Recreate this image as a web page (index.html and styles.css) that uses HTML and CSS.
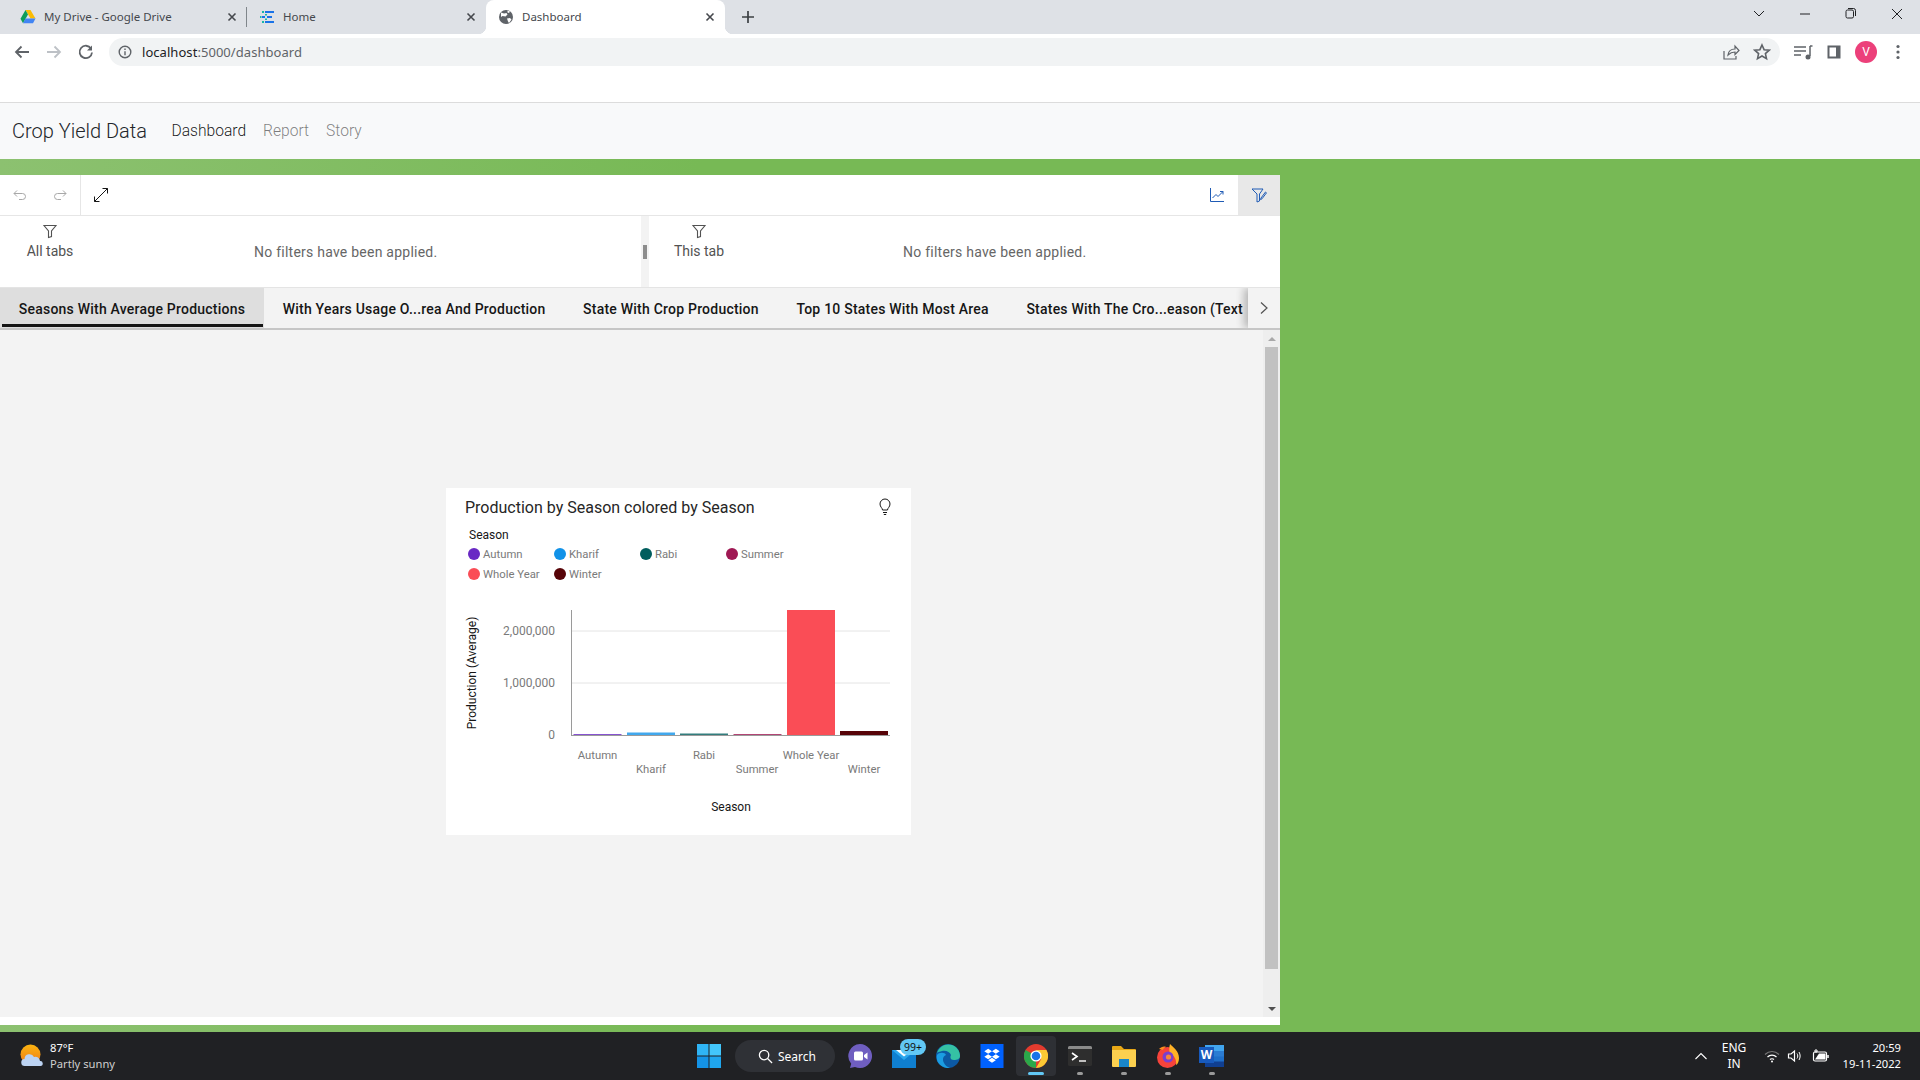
FILE: index.html
```html
<!DOCTYPE html>
<html lang="en">
<head>
    <meta charset="UTF-8">
    <title>Dashboard</title>
    <link rel="stylesheet" href="styles.css">
</head>
<body>
    <!-- browser chrome -->
    <div class="tabstrip">
        <div class="tab">
            <svg class="favicon" viewBox="0 0 16 16"><path d="M5.5 1h5l5 8.6h-5z" fill="#fbbc04"/><path d="M5.5 1 .5 9.8l2.5 4.4 5-8.8z" fill="#0f9d58"/><path d="M3 14.2h10l2.5-4.6h-10z" fill="#4285f4"/></svg>
            <span class="tab-title">My Drive - Google Drive</span>
            <svg class="tab-close" viewBox="0 0 10 10"><path d="M1.5 1.5l7 7M8.5 1.5l-7 7"/></svg>
        </div>
        <div class="tab-sep"></div>
        <div class="tab">
            <svg class="favicon" viewBox="0 0 16 16"><path d="M6 2h9v2H6zM3 7h3v2H3zM8 7h5v2H8zM6 12h9v2H6z" fill="#1a73e8"/><path d="M3 2h2v2H3zM1 7h1.500v2H1zM3 12h2v2H3zM6 5h2v1.500H6zM6 9.500h2V11H6z" fill="#17b8a6"/></svg>
            <span class="tab-title">Home</span>
            <svg class="tab-close" viewBox="0 0 10 10"><path d="M1.5 1.5l7 7M8.5 1.5l-7 7"/></svg>
        </div>
        <div class="tab tab-active">
            <svg class="favicon" viewBox="0 0 16 16"><circle cx="8" cy="8" r="7" fill="#5f6368"/><path d="M3 3.500l3 1 2.500-.5 1 1.500-2 2-3-.5-1.500 1zM9 9.500l3-.5 1.500 1.500L11 14l-1-1.500zM9.500 1.500l2.500 1-1 1.500-1.500-.5z" fill="#fff"/></svg>
            <span class="tab-title">Dashboard</span>
            <svg class="tab-close" viewBox="0 0 10 10"><path d="M1.5 1.5l7 7M8.5 1.5l-7 7"/></svg>
        </div>
        <svg class="new-tab" viewBox="0 0 14 14"><path d="M7 1v12M1 7h12"/></svg>
        <div class="window-controls">
            <svg class="win-btn" viewBox="0 0 46 16"><path d="M18 5l5 5 5-5"/></svg>
            <svg class="win-btn" viewBox="0 0 46 16"><path d="M18 8h10"/></svg>
            <svg class="win-btn" viewBox="0 0 46 16"><rect x="18" y="4" width="7.500" height="8" rx="1.500"/><path d="M20 2.500h5.500a2 2 0 0 1 2 2V10"/></svg>
            <svg class="win-btn" viewBox="0 0 46 16"><path d="M18 3l10 10M28 3L18 13"/></svg>
        </div>
    </div>

    <div class="toolbar">
        <svg class="nav-btn" viewBox="0 0 32 16"><path d="M23 8H10M15.500 2.500 10 8l5.500 5.500"/></svg>
        <svg class="nav-btn nav-off" viewBox="0 0 32 16"><path d="M9 8h13M16.500 2.500 22 8l-5.500 5.500"/></svg>
        <svg class="nav-btn" viewBox="0 0 32 16"><path d="M21 4.500A6.200 6.200 0 1 0 22 8.500"/><path class="nav-fill" d="M22 1.500v5h-5z"/></svg>
        <div class="omnibox">
            <svg class="info-icon" viewBox="0 0 14 14"><circle cx="7" cy="7" r="5.800"/><path d="M7 6.200v4M7 3.500v1.500"/></svg>
            <span class="url">localhost<span class="url-rest">:5000/dashboard</span></span>
            <svg class="omni-icon omni-share" viewBox="0 0 18 18"><path d="M2 8v8h12v-3"/><path d="M6 12c.5-4 3-6 7-6V3l4 4.500-4 4V9c-3 0-5 1-7 3z"/></svg>
            <svg class="omni-icon" viewBox="0 0 18 18"><path d="M9 2l2.100 4.700 5.100.5-3.800 3.400 1.100 5L9 13l-4.500 2.600 1.100-5L1.800 7.200l5.100-.5z" stroke-width="1.600"/></svg>
        </div>
        <svg class="tool-btn" viewBox="0 0 32 18"><path d="M8 4h12M8 8h12M8 12h7M24 3v10"/><path d="M24 3h2.500"/><circle class="nav-fill" cx="22" cy="14" r="2.500"/></svg>
        <svg class="tool-btn" viewBox="0 0 32 18"><rect x="9.500" y="2.500" width="13" height="13" class="panel-icon"/><rect x="11.500" y="4.500" width="6.500" height="9" fill="#fff" stroke="none"/></svg>
        <div class="tool-slot"><span class="avatar">V</span></div>
        <svg class="tool-btn" viewBox="0 0 32 18"><circle class="nav-fill" cx="16" cy="3.500" r="1.600"/><circle class="nav-fill" cx="16" cy="9" r="1.600"/><circle class="nav-fill" cx="16" cy="14.500" r="1.600"/></svg>
    </div>
    <div class="blank-bar"></div>

    <!-- app -->
    <nav class="navbar">
        <span class="brand">Crop Yield Data</span>
        <a class="nav-link nav-link-on">Dashboard</a>
        <a class="nav-link">Report</a>
        <a class="nav-link">Story</a>
    </nav>

    <main class="stage">
        <section class="panel">
            <div class="panel-tools">
                <svg class="ptool ptool-off" viewBox="0 0 16 16"><path d="M5 3.500 2 6.500l3 3M2 6.500h8.500a3 3 0 0 1 0 6H7"/></svg>
                <svg class="ptool ptool-off" viewBox="0 0 16 16"><path d="M11 3.500l3 3-3 3M14 6.500H5.500a3 3 0 0 0 0 6H9"/></svg>
                <div class="ptool-line"></div>
                <svg class="ptool" viewBox="0 0 16 16"><path d="M1.500 14.500l13-13M9.500 1.500h5v5M1.500 9.500v5h5"/></svg>
                <div class="ptool-right">
                    <svg class="ptool ptool-blue" viewBox="0 0 16 16"><path d="M1.500 1v13.500H15"/><path d="M3.500 11l3.500-3.500 2 2L14 4.500M11 4.500h3v3"/></svg>
                    <div class="ptool-on">
                        <svg class="ptool ptool-blue" viewBox="0 0 16 16"><path d="M1 2h11L8.500 7v7l-2.500 1V7z"/><path d="M10 11l4.500-6 1 .8-4.500 6-1.500.8z"/></svg>
                    </div>
                </div>
            </div>

            <div class="filters">
                <div class="filter-part filter-left">
                    <div class="filter-scope">
                        <svg class="funnel" viewBox="0 0 16 16"><path d="M2 2.500h12L9.500 8v5.500l-3 1V8z"/></svg>
                        <span>All tabs</span>
                    </div>
                    <span class="filter-msg">No filters have been applied.</span>
                </div>
                <div class="splitter"><span class="split-handle"></span></div>
                <div class="filter-part">
                    <div class="filter-scope">
                        <svg class="funnel" viewBox="0 0 16 16"><path d="M2 2.500h12L9.500 8v5.500l-3 1V8z"/></svg>
                        <span>This tab</span>
                    </div>
                    <span class="filter-msg">No filters have been applied.</span>
                </div>
            </div>

            <div class="sheet-tabs">
                <div class="sheet-scroll">
                    <span class="sheet-tab sheet-on">Seasons With Average Productions</span>
                    <span class="sheet-tab">With Years Usage O...rea And Production</span>
                    <span class="sheet-tab">State With Crop Production</span>
                    <span class="sheet-tab">Top 10 States With Most Area</span>
                    <span class="sheet-tab">States With The Cro...eason (Text</span>
                </div>
                <div class="sheet-next">
                    <svg viewBox="0 0 10 14"><path d="M2 1.500 8 7l-6 5.500"/></svg>
                </div>
            </div>

            <div class="canvas">
                <div class="canvas-main">
                    <div class="card">
                        <div class="card-head">
                            <span class="card-title">Production by Season colored by Season</span>
                            <svg class="bulb" viewBox="0 0 14 18"><path d="M4.500 12c0-2-2.500-3-2.500-6a5 5 0 0 1 10 0c0 3-2.500 4-2.500 6z"/><path d="M5 14.500h4M5.800 16.500h2.400"/></svg>
                        </div>
                        <div class="legend-name">Season</div>
                        <div class="legend">
                            <span class="legend-item"><i class="dot c-autumn"></i>Autumn</span>
                            <span class="legend-item"><i class="dot c-kharif"></i>Kharif</span>
                            <span class="legend-item"><i class="dot c-rabi"></i>Rabi</span>
                            <span class="legend-item"><i class="dot c-summer"></i>Summer</span>
                            <span class="legend-item"><i class="dot c-whole"></i>Whole Year</span>
                            <span class="legend-item"><i class="dot c-winter"></i>Winter</span>
                        </div>
                        <svg class="chart" viewBox="446 590 465 245">
                            <line class="grid" x1="571" y1="631" x2="890" y2="631"/>
                            <line class="grid" x1="571" y1="683" x2="890" y2="683"/>
                            <rect class="bar" x="573.500" y="734" width="48" height="1" fill="#6929c4"/>
                            <rect class="bar" x="627" y="732.500" width="48" height="2.500" fill="#1192e8"/>
                            <rect class="bar" x="680" y="733.500" width="48" height="1.500" fill="#005d5d"/>
                            <rect class="bar" x="733.500" y="734" width="48" height="1" fill="#9f1853"/>
                            <rect x="787" y="610" width="48" height="125" fill="#fa4d56"/>
                            <rect x="840" y="731" width="48" height="4" fill="#570408"/>
                            <line class="axis" x1="571.500" y1="610" x2="571.500" y2="735.500"/>
                            <line class="axis" x1="571" y1="735.500" x2="890" y2="735.500"/>
                            <text class="tick-y" x="555" y="635">2,000,000</text>
                            <text class="tick-y" x="555" y="687">1,000,000</text>
                            <text class="tick-y" x="555" y="739">0</text>
                            <text class="tick" x="597.500" y="759">Autumn</text>
                            <text class="tick" x="651" y="773">Kharif</text>
                            <text class="tick" x="704" y="759">Rabi</text>
                            <text class="tick" x="757" y="773">Summer</text>
                            <text class="tick" x="811" y="759">Whole Year</text>
                            <text class="tick" x="864" y="773">Winter</text>
                            <text class="axis-name" x="731" y="811">Season</text>
                            <text class="axis-name" transform="translate(476 673) rotate(-90)">Production (Average)</text>
                        </svg>
                    </div>
                </div>
                <div class="scrollbar">
                    <div class="scroll-btn"><span class="arrow-up"></span></div>
                    <div class="scroll-thumb"></div>
                    <div class="scroll-btn"><span class="arrow-down"></span></div>
                </div>
            </div>
        </section>
    </main>

    <!-- windows taskbar -->
    <footer class="taskbar">
        <div class="weather">
            <svg class="weather-icon" viewBox="0 0 24 24"><defs><linearGradient id="sun" x1="0" y1="0" x2="0" y2="1"><stop offset="0" stop-color="#fbb40f"/><stop offset="1" stop-color="#ee7a1a"/></linearGradient></defs><circle cx="10.500" cy="10.500" r="10" fill="url(#sun)"/><path d="M5 22a3.500 3.500 0 0 1-.5-7 5 5 0 0 1 9.500-2 4.500 4.500 0 0 1 6 4 2.500 2.500 0 0 1 .5 5z" fill="#bcd3f2"/></svg>
            <div class="weather-text">
                <span class="temp">87°F</span>
                <span class="sky">Partly sunny</span>
            </div>
        </div>
        <div class="task-center">
            <div class="task-item">
                <svg class="task-icon" viewBox="0 0 24 24"><path d="M0 0h11.500v11.500H0z" fill="#2fb4f5"/><path d="M12.500 0H24v11.500H12.500z" fill="#43c6fb"/><path d="M0 12.500h11.500V24H0z" fill="#1493e6"/><path d="M12.500 12.500H24V24H12.500z" fill="#1fa6ee"/></svg>
            </div>
            <div class="task-search">
                <svg class="search-icon" viewBox="0 0 16 16"><circle cx="6.500" cy="6.500" r="5"/><path d="M10.200 10.200 15 15"/></svg>
                <span>Search</span>
            </div>
            <div class="task-item">
                <svg class="task-icon" viewBox="0 0 24 24"><path d="M12 0a12 12 0 1 1-5 22.900L2 24l1.200-4.300A12 12 0 0 1 12 0z" fill="#6f5ec0"/><rect x="6" y="7.500" width="9" height="9" rx="1.500" fill="#fff"/><path d="M16 11l3.500-2.500v7L16 13z" fill="#fff"/></svg>
            </div>
            <div class="task-item">
                <svg class="task-icon" viewBox="0 0 24 24"><path d="M0 6h24v18H0z" fill="#0f7fd0"/><path d="M0 6h24L12 16z" fill="#2aa7ee"/><path d="M4 6h16l-8 6.500z" fill="#fff"/></svg>
                <span class="task-badge">99+</span>
            </div>
            <div class="task-item">
                <svg class="task-icon" viewBox="0 0 24 24"><circle cx="12" cy="12" r="12" fill="#0c59a4"/><path d="M1 9C3 2 10-1 16 1c5 2 8 6 8 11 0 3-3 4-6 4-4 0-4-3-3-5C14 8 10 6 6 7 4 7.500 2 8 1 9z" fill="#35c1a4"/><path d="M1 11c2-3 8-3 9 0-3 1-4 5-2 8 1 2 3 4 6 5C7 25-1 19 1 11z" fill="#1b9de2"/></svg>
            </div>
            <div class="task-item">
                <svg class="task-icon" viewBox="0 0 24 25"><rect width="24" height="25" fill="#0061fe"/><path d="M8 5l4 2.600L8 10.200 4 7.600zM16 5l4 2.600-4 2.600-4-2.600zM8 10.800l4 2.600-4 2.600-4-2.600zM16 10.800l4 2.600-4 2.600-4-2.600zM8 17l4-2.600 4 2.600-4 2.600z" fill="#fff"/></svg>
            </div>
            <div class="task-item task-open">
                <svg class="task-icon" viewBox="0 0 24 24"><circle cx="12" cy="12" r="12" fill="#e33b2e"/><path d="M12 12 1.600 6A12 12 0 0 0 12 24z" fill="#2aa84a"/><path d="M12 6h10.400A12 12 0 0 1 12 24l5.200-9z" fill="#fcc934"/><circle cx="12" cy="12" r="5.600" fill="#fff"/><circle cx="12" cy="12" r="4.300" fill="#1a73e8"/></svg>
                <span class="task-bar"></span>
            </div>
            <div class="task-item">
                <svg class="task-icon" viewBox="0 0 24 24"><rect y="2" width="24" height="20" rx="1.500" fill="#2e2e2e"/><path d="M0 3.500A1.500 1.500 0 0 1 1.500 2h21A1.500 1.500 0 0 1 24 3.500V5H0z" fill="#8a8a8a"/><path d="M4 9l5 3.500L4 16" fill="none" stroke="#fff" stroke-width="1.600"/><path d="M11 17h7" stroke="#fff" stroke-width="1.400"/></svg>
                <span class="task-dot"></span>
            </div>
            <div class="task-item">
                <svg class="task-icon" viewBox="0 0 24 24"><path d="M0 3a1 1 0 0 1 1-1h8l3 3h11a1 1 0 0 1 1 1v3H0z" fill="#e9a817"/><path d="M0 6h24v16a1 1 0 0 1-1 1H1a1 1 0 0 1-1-1z" fill="#fcd04f"/><rect x="7" y="15" width="10" height="8" fill="#1a86c8"/></svg>
                <span class="task-dot"></span>
            </div>
            <div class="task-item">
                <svg class="task-icon" viewBox="0 0 24 24"><circle cx="11.500" cy="13.500" r="10.500" fill="#f6433b"/><path d="M14 0c3 3 9 7 9 14 0 3-1 6-3 7 1-5-2-10-6-11-1-3-1-7 0-10z" fill="#ffb226"/><path d="M3 5c2-2 5-3 7-2-2 1-3 2-3 3z" fill="#ff8a1e"/><circle cx="12" cy="13" r="5.500" fill="#7a3fd0"/><circle cx="12.500" cy="13" r="2.600" fill="#f7873a"/></svg>
                <span class="task-dot"></span>
            </div>
            <div class="task-item">
                <svg class="task-icon" viewBox="0 0 24 24"><rect x="5" y="1" width="19" height="22" rx="1" fill="#1f6fc9"/><rect x="5" y="1" width="19" height="6" fill="#41a5ee"/><rect x="5" y="7" width="19" height="5.500" fill="#2b7cd3"/><rect x="5" y="17.500" width="19" height="5.500" fill="#103f91"/></svg>
                <span class="word-w">W</span>
                <span class="task-dot"></span>
            </div>
        </div>
        <div class="tray">
            <svg class="tray-caret" viewBox="0 0 14 8"><path d="M1.500 7 7 1.500 12.500 7"/></svg>
            <div class="tray-lang"><span>ENG</span><span>IN</span></div>
            <svg class="tray-icon" viewBox="0 0 16 16"><path d="M1 6.500c4-4 10-4 14 0" stroke="#777"/><path d="M3.500 9c2.500-2.500 6.500-2.500 9 0M6 11.500c1-1 3-1 4 0"/><circle cx="8" cy="13.500" r="1" fill="#fff" stroke="none"/></svg>
            <svg class="tray-icon" viewBox="0 0 16 16"><path d="M1.500 6v4h2.500L7.500 13V3L4 6z"/><path d="M10 5.500c1 1.500 1 3.500 0 5M12 4c1.500 2.500 1.500 5.500 0 8" stroke-width="1"/></svg>
            <svg class="tray-icon tray-battery" viewBox="0 0 18 16"><rect x="1.500" y="4" width="13" height="9" rx="1.500"/><path d="M3 11.500 7 5.500h6.500v6z" fill="#fff" stroke="none"/><path d="M16 7v3" stroke-width="1.500"/><path d="M4 1v4M2 3h4" stroke-width="1"/></svg>
            <div class="tray-clock"><span>20:59</span><span>19-11-2022</span></div>
        </div>
    </footer>
</body>
</html>
```

FILE: styles.css
```css
* {
    box-sizing: border-box;
}

html, body {
    height: 100%;
}

body {
    display: flex;
    flex-direction: column;
    margin: 0;
    overflow: hidden;
    background-color: white;
    font-family: Roboto, "Liberation Sans", sans-serif;
}

svg {
    display: block;
    flex-shrink: 0;
}

/* browser tabs */
.tabstrip {
    display: flex;
    align-items: center;
    height: 34px;
    padding-left: 8px;
    background-color: #dee1e6;
    font-family: "Noto Sans", sans-serif;
}

.tab {
    position: relative;
    display: flex;
    align-items: center;
    width: 239px;
    height: 34px;
    padding: 0 8px 1px 12px;
    font-size: 11.5px;
    color: #45484d;
}

.tab-active {
    background-color: white;
    border-radius: 8px 8px 0 0;
}

.tab-active::before,
.tab-active::after {
    content: "";
    position: absolute;
    bottom: 0;
    width: 8px;
    height: 8px;
}

.tab-active::before {
    left: -8px;
    background: radial-gradient(circle at 0 0, transparent 8px, white 8.5px);
}

.tab-active::after {
    right: -8px;
    background: radial-gradient(circle at 100% 0, transparent 8px, white 8.5px);
}

.tab-sep {
    width: 1px;
    height: 20px;
    margin-left: -1px;
    background-color: #80868b;
}

.favicon {
    width: 16px;
    height: 16px;
    margin-right: 8px;
}

.tab-title {
    flex: 1;
    white-space: nowrap;
    overflow: hidden;
}

.tab-close {
    width: 10px;
    height: 10px;
    margin-right: 2px;
    fill: none;
    stroke: #45484d;
    stroke-width: 1.600;
}

.new-tab {
    width: 14px;
    height: 14px;
    margin-left: 16px;
    fill: none;
    stroke: #3c4043;
    stroke-width: 1.700;
}

.window-controls {
    display: flex;
    margin-left: auto;
}

.win-btn {
    width: 46px;
    height: 16px;
    margin-top: -6px;
    fill: none;
    stroke: #202124;
    stroke-width: 1;
}

/* browser toolbar */
.toolbar {
    display: flex;
    align-items: center;
    height: 34px;
    padding: 2px 6px 0;
    background-color: white;
}

.nav-btn {
    width: 32px;
    height: 16px;
    fill: none;
    stroke: #5f6368;
    stroke-width: 1.800;
}

.nav-off {
    stroke: #bdc1c6;
}

.nav-fill {
    fill: #5f6368;
    stroke: none;
}

.omnibox {
    display: flex;
    align-items: center;
    flex: 1;
    height: 28px;
    margin: 0 6px 0 7px;
    padding: 0 9px 0 9px;
    border-radius: 14px;
    background-color: #f1f3f4;
}

.info-icon {
    width: 14px;
    height: 14px;
    margin-right: 10px;
    fill: none;
    stroke: #5f6368;
    stroke-width: 1.400;
}

.url {
    flex: 1;
    font-family: "Noto Sans", sans-serif;
    font-size: 13px;
    letter-spacing: 0.050px;
    color: #202124;
}

.url-rest {
    color: #5f6368;
}

.omni-icon {
    width: 18px;
    height: 18px;
    margin-left: 13px;
    fill: none;
    stroke: #5f6368;
    stroke-width: 1.200;
}

.tool-btn {
    width: 32px;
    height: 18px;
    fill: none;
    stroke: #5f6368;
    stroke-width: 1.500;
}

.panel-icon {
    fill: #5f6368;
    stroke: none;
}

.tool-slot {
    display: flex;
    justify-content: center;
    width: 32px;
}

.avatar {
    display: flex;
    align-items: center;
    justify-content: center;
    width: 22px;
    height: 22px;
    border-radius: 50%;
    background-color: #ec407a;
    color: white;
    font-size: 12px;
}

.blank-bar {
    height: 35px;
    border-bottom: 1px solid #dcdcdc;
    background-color: white;
}

/* app navbar */
.navbar {
    display: flex;
    align-items: center;
    height: 56px;
    padding-left: 12px;
    background-color: #f8f9fa;
    font-weight: 300;
}

.brand {
    margin-right: 24.500px;
    font-size: 20px;
    color: #212529;
}

.nav-link {
    margin-right: 17px;
    font-size: 15.600px;
    color: rgba(0, 0, 0, 0.5);
}

.nav-link-on {
    color: rgba(0, 0, 0, 0.9);
}

/* green page body */
.stage {
    flex: 1;
    min-height: 0;
    padding-top: 16px;
    background: linear-gradient(to right, #8cc170, #77b955 700px);
}

.panel {
    display: flex;
    flex-direction: column;
    width: 1280px;
    height: 850px;
    padding-bottom: 8px;
    background-color: white;
    color: #525252;
}

.panel-tools {
    display: flex;
    align-items: center;
    height: 41px;
    border-bottom: 1px solid #e6e6e6;
}

.ptool {
    width: 16px;
    height: 16px;
    margin: 0 12px;
    fill: none;
    stroke: #161616;
    stroke-width: 1;
}

.ptool-off {
    stroke: #a8a8a8;
}

.ptool-blue {
    stroke: #1f5bb5;
}

.ptool-line {
    width: 1px;
    height: 40px;
    margin-right: 0;
    background-color: #e6e6e6;
}

.ptool-right {
    display: flex;
    align-items: center;
    margin-left: auto;
}

.ptool-on {
    display: flex;
    align-items: center;
    justify-content: center;
    width: 42px;
    height: 40px;
    margin-left: 1px;
    background-color: #e8e8e8;
}

.filters {
    display: flex;
    height: 72px;
    border-bottom: 1px solid #e4e4e4;
    font-size: 14px;
}

.filter-part {
    display: flex;
    flex: 1;
}

.filter-left {
    flex: none;
    width: 641px;
}

.filter-scope {
    display: flex;
    flex-direction: column;
    align-items: center;
    width: 100px;
    padding-top: 7px;
    line-height: 16px;
}

.funnel {
    width: 16px;
    height: 16px;
    margin-bottom: 4px;
    fill: none;
    stroke: #525252;
    stroke-width: 1.100;
}

.filter-msg {
    margin: 28px 0 0 154px;
    line-height: 16px;
    letter-spacing: 0.240px;
    color: #666;
}

.splitter {
    display: flex;
    align-items: center;
    width: 8px;
    padding-left: 2px;
    background-color: #f3f3f3;
}

.split-handle {
    width: 4px;
    height: 14px;
    background-color: #8d8d8d;
}

.sheet-tabs {
    display: flex;
    height: 42px;
    border-bottom: 2px solid #c6c6c6;
    background-color: #f3f3f3;
    color: #161616;
    font-size: 14px;
    font-weight: 500;
}

.sheet-scroll {
    display: flex;
    flex: 1;
    min-width: 0;
    overflow: hidden;
}

.sheet-tab {
    position: relative;
    flex: none;
    padding: 0 18.800px;
    line-height: 42px;
    letter-spacing: 0.220px;
    white-space: nowrap;
}

.sheet-on {
    background-color: #dedede;
}

.sheet-on::after {
    content: "";
    position: absolute;
    left: 2px;
    right: 1px;
    bottom: 1px;
    height: 3px;
    background-color: #161616;
}

.sheet-next {
    display: flex;
    align-items: center;
    justify-content: center;
    width: 32px;
    background-color: #f3f3f3;
    box-shadow: -4px 0 8px rgba(0, 0, 0, 0.25);
    clip-path: inset(0 0 0 -12px);
}

.sheet-next svg {
    width: 10px;
    height: 14px;
    fill: none;
    stroke: #525252;
    stroke-width: 1.200;
}

/* chart area */
.canvas {
    display: flex;
    flex: 1;
    min-height: 0;
    background-color: #f3f3f3;
}

.canvas-main {
    flex: 1;
    padding: 158px 0 0 446px;
}

.card {
    width: 465px;
    height: 347px;
    background-color: white;
}

.card-head {
    display: flex;
    align-items: center;
    justify-content: space-between;
    height: 38px;
    padding: 0 19px;
}

.card-title {
    font-size: 16px;
    color: #262626;
}

.bulb {
    width: 14px;
    height: 18px;
    fill: none;
    stroke: #161616;
    stroke-width: 1;
}

.legend-name {
    height: 18px;
    padding-left: 23px;
    font-size: 12px;
    line-height: 18px;
    color: #161616;
}

.legend {
    display: grid;
    grid-template-columns: repeat(4, 86px);
    grid-auto-rows: 20px;
    margin-left: 22px;
    margin-bottom: 6px;
    font-size: 11.300px;
    color: #7a7a7a;
}

.legend-item {
    display: flex;
    align-items: center;
    white-space: nowrap;
}

.dot {
    width: 12px;
    height: 12px;
    margin-right: 3px;
    border-radius: 50%;
}

.c-autumn { background-color: #6929c4; }
.c-kharif { background-color: #1192e8; }
.c-rabi { background-color: #005d5d; }
.c-summer { background-color: #9f1853; }
.c-whole { background-color: #fa4d56; }
.c-winter { background-color: #570408; }

.chart {
    width: 465px;
    height: 245px;
}

.grid {
    stroke: #e4e4e4;
    stroke-width: 1;
}

.axis {
    stroke: #9a9a9a;
    stroke-width: 1;
}

.bar {
    opacity: 0.8;
}

.tick {
    font-size: 11.300px;
    fill: #7a7a7a;
    text-anchor: middle;
}

.tick-y {
    font-size: 12px;
    fill: #7a7a7a;
    text-anchor: end;
}

.axis-name {
    font-size: 12px;
    fill: #161616;
    text-anchor: middle;
}

.scrollbar {
    display: flex;
    flex-direction: column;
    width: 17px;
    background-color: #eeeeee;
}

.scroll-btn {
    display: flex;
    align-items: center;
    justify-content: center;
    height: 17px;
}

.scroll-thumb {
    flex: 1;
    margin: 0 2px 31px;
    background-color: #c1c1c1;
}

.arrow-up {
    border-left: 4px solid transparent;
    border-right: 4px solid transparent;
    border-bottom: 4px solid #a8a8a8;
}

.arrow-down {
    border-left: 4px solid transparent;
    border-right: 4px solid transparent;
    border-top: 4px solid #505050;
}

/* windows taskbar */
.taskbar {
    display: flex;
    align-items: center;
    height: 48px;
    background-color: #202124;
    color: white;
    font-family: "Noto Sans", sans-serif;
    font-size: 11.200px;
}

.weather {
    display: flex;
    align-items: center;
    width: 687px;
    padding-left: 20px;
}

.weather-icon {
    width: 24px;
    height: 24px;
    margin-right: 6px;
}

.weather-text {
    display: flex;
    flex-direction: column;
    line-height: 16px;
}

.sky {
    color: #cfcfcf;
}

.task-center {
    display: flex;
    align-items: center;
}

.task-item {
    position: relative;
    display: flex;
    align-items: center;
    justify-content: center;
    width: 44px;
    height: 40px;
}

.task-icon {
    width: 24px;
    height: 24px;
}

.task-search {
    display: flex;
    align-items: center;
    width: 100px;
    height: 32px;
    margin: 0 3px 0 4px;
    padding-left: 23px;
    border-radius: 16px;
    background-color: #2f3136;
    font-size: 12px;
}

.search-icon {
    width: 15px;
    height: 15px;
    margin-right: 5px;
    fill: none;
    stroke: white;
    stroke-width: 1.400;
}

.task-badge {
    position: absolute;
    top: 3px;
    left: 18px;
    width: 26px;
    height: 16px;
    border-radius: 8px;
    background-color: #62c8f5;
    color: #111;
    font-size: 10.500px;
    line-height: 16px;
    text-align: center;
}

.task-open {
    border-radius: 4px;
    background-color: #2e3035;
    width: 40px;
    margin: 0 2px;
}

.task-bar {
    position: absolute;
    bottom: 1px;
    left: 12px;
    width: 16px;
    height: 3px;
    border-radius: 2px;
    background-color: #62c8f5;
}

.task-dot {
    position: absolute;
    bottom: 1px;
    left: 19px;
    width: 6px;
    height: 3px;
    border-radius: 2px;
    background-color: #9a9a9a;
}

.word-w {
    position: absolute;
    top: 11px;
    left: 9px;
    width: 15px;
    height: 16px;
    background-color: #185abd;
    font-size: 12px;
    font-weight: 700;
    line-height: 16px;
    text-align: center;
}

.tray {
    display: flex;
    align-items: center;
    margin-left: auto;
    padding-right: 19px;
}

.tray-caret {
    width: 14px;
    height: 8px;
    margin-right: 13px;
    fill: none;
    stroke: white;
    stroke-width: 1.100;
}

.tray-lang {
    display: flex;
    flex-direction: column;
    align-items: center;
    width: 26px;
    margin-right: 17px;
    font-size: 12px;
    line-height: 16px;
}

.tray-icon {
    width: 16px;
    height: 16px;
    margin-right: 7px;
    fill: none;
    stroke: white;
    stroke-width: 1.200;
}

.tray-battery {
    width: 18px;
    margin-left: 2px;
    margin-right: 0;
}

.tray-clock {
    display: flex;
    flex-direction: column;
    align-items: flex-end;
    width: 71px;
    line-height: 16px;
}
```
